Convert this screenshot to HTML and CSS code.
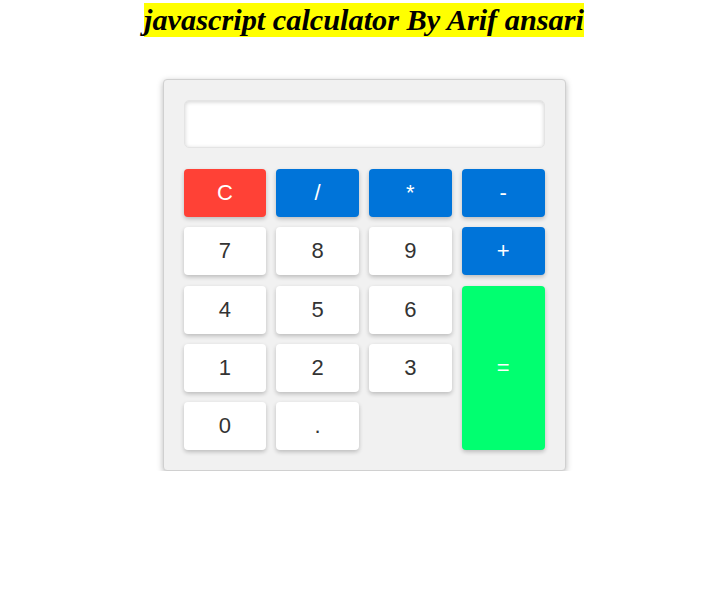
FILE: index.html
```html
<!DOCTYPE html>
<html>
<head>
<meta charset="utf-8">
<link rel="stylesheet" href="styles.css">
</head>
<body>
<h1 class="title"><span class="title-mark">javascript calculator By Arif ansari</span></h1>
<div class="calc">
  <input class="display" type="text" readonly>
  <div class="keys">
    <button class="key key-clear">C</button>
    <button class="key key-op">/</button>
    <button class="key key-op">*</button>
    <button class="key key-op">-</button>
    <button class="key">7</button>
    <button class="key">8</button>
    <button class="key">9</button>
    <button class="key key-op">+</button>
    <button class="key">4</button>
    <button class="key">5</button>
    <button class="key">6</button>
    <button class="key key-eq">=</button>
    <button class="key">1</button>
    <button class="key">2</button>
    <button class="key">3</button>
    <button class="key">0</button>
    <button class="key">.</button>
  </div>
</div>
</body>
</html>
```
FILE: styles.css
```css
html, body { background: #fff; }
body {
  margin: 0 8px 0 13px;
  font-family: "Liberation Serif", serif;
}
.title {
  margin: 4px 0 0;
  text-align: center;
  font-family: "Liberation Serif", serif;
  font-style: italic;
  font-weight: bold;
  font-size: 30.3px;
  line-height: 33px;
}
.title-mark { background: #ffff00; color: #000; }
.calc {
  width: 361px;
  margin: 42px auto 0;
  padding: 20px;
  background: #f1f1f1;
  border: 1px solid #d0d0d0;
  border-radius: 4px;
  box-shadow: 0 2px 6px rgba(0,0,0,0.28);
}
.display {
  display: block;
  box-sizing: border-box;
  width: 100%;
  height: 48px;
  margin: 0 0 21px;
  border: 1px solid #e4e4e4;
  border-radius: 5px;
  background: #fff;
  box-shadow: inset 0 1px 4px rgba(0,0,0,0.18);
  outline: none;
}
.keys {
  display: grid;
  grid-template-columns: repeat(4, 1fr);
  grid-auto-rows: 48px;
  gap: 10.3px 10px;
}
.key {
  border: none;
  border-radius: 4px;
  background: #fff;
  color: #333;
  font-family: "Liberation Sans", Arial, sans-serif;
  font-size: 22px;
  box-shadow: 0 2px 4px rgba(0,0,0,0.22);
  padding: 0;
}
.key-op { background: #0074d9; color: #fff; }
.key-clear { background: #ff4136; color: #fff; }
.key-eq { background: #01ff70; color: #fff; grid-column: 4; grid-row: 3 / span 3; }
```
